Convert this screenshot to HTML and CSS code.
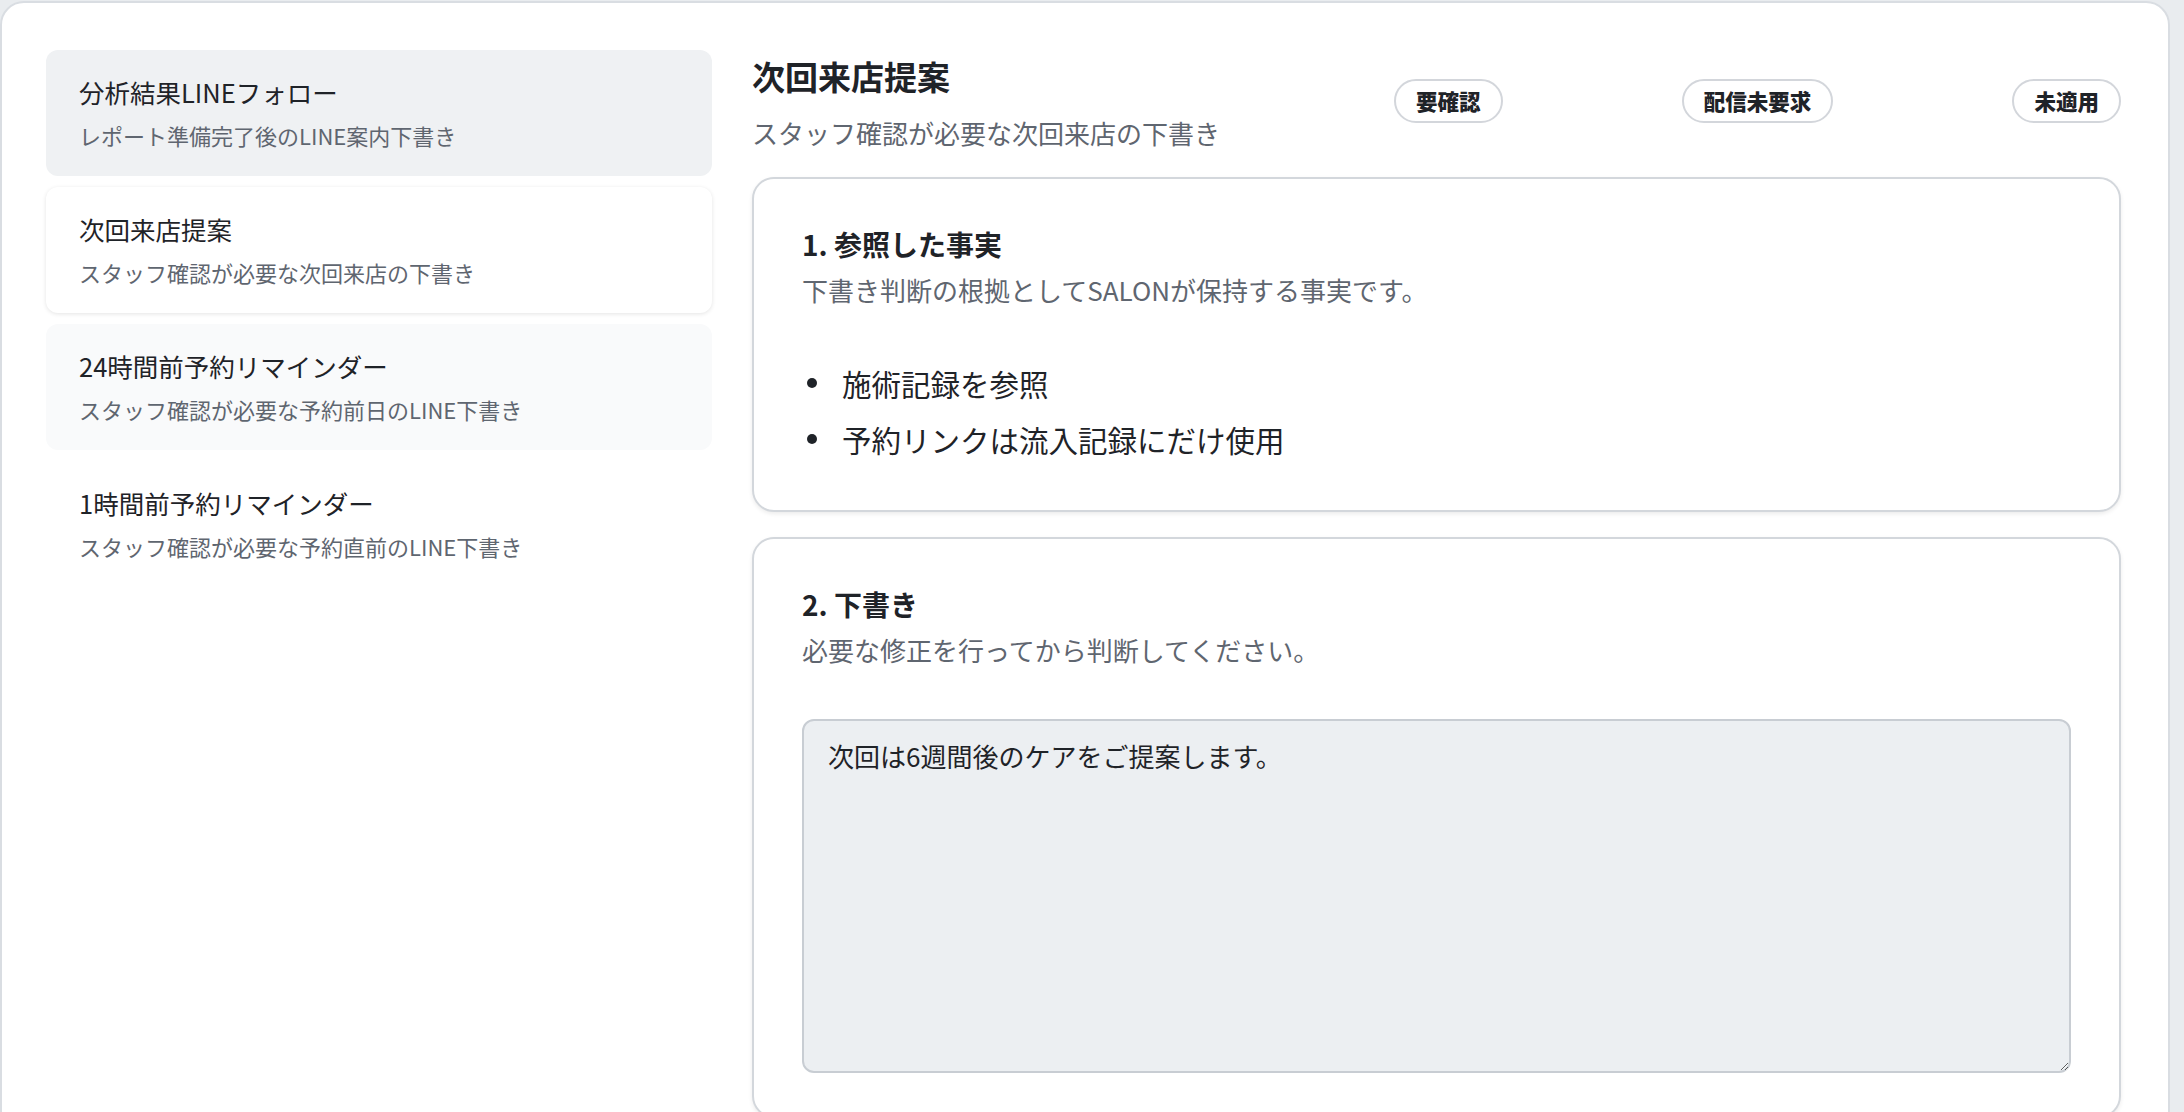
FILE: index.html
```html
<!DOCTYPE html>
<html lang="ja">
<head>
<meta charset="utf-8">
<title>次回来店提案</title>
<link rel="stylesheet" href="styles.css">
</head>
<body>
<div class="page">
  <div class="shell">
    <nav class="sidebar">
      <div class="item item-active">
        <div class="item-title">分析結果LINEフォロー</div>
        <div class="item-sub">レポート準備完了後のLINE案内下書き</div>
      </div>
      <div class="item item-current">
        <div class="item-title">次回来店提案</div>
        <div class="item-sub">スタッフ確認が必要な次回来店の下書き</div>
      </div>
      <div class="item item-soft">
        <div class="item-title">24時間前予約リマインダー</div>
        <div class="item-sub">スタッフ確認が必要な予約前日のLINE下書き</div>
      </div>
      <div class="item">
        <div class="item-title">1時間前予約リマインダー</div>
        <div class="item-sub">スタッフ確認が必要な予約直前のLINE下書き</div>
      </div>
    </nav>
    <main class="panel">
      <header class="panel-head">
        <div class="panel-title-block">
          <h1 class="panel-title">次回来店提案</h1>
          <p class="panel-sub">スタッフ確認が必要な次回来店の下書き</p>
        </div>
        <div class="badges">
          <span class="badge">要確認</span>
          <span class="badge">配信未要求</span>
          <span class="badge">未適用</span>
        </div>
      </header>
      <section class="card">
        <h2 class="card-title">1. 参照した事実</h2>
        <p class="card-desc">下書き判断の根拠としてSALONが保持する事実です。</p>
        <ul class="facts">
          <li>施術記録を参照</li>
          <li>予約リンクは流入記録にだけ使用</li>
        </ul>
      </section>
      <section class="card">
        <h2 class="card-title">2. 下書き</h2>
        <p class="card-desc">必要な修正を行ってから判断してください。</p>
        <textarea class="draft">次回は6週間後のケアをご提案します。</textarea>
      </section>
    </main>
  </div>
</div>
</body>
</html>
```

FILE: styles.css
```css
* { box-sizing: border-box; }

html, body {
  margin: 0;
  padding: 0;
  background: #e9ecef;
  font-family: "Noto Sans CJK JP", "Noto Sans", sans-serif;
  color: #1f2328;
}

.page {
  padding: 1px 14px 0 0;
}

.shell {
  background: #ffffff;
  border: 2px solid #d9dde2;
  border-radius: 24px;
  display: grid;
  grid-template-columns: 666px 1fr;
  column-gap: 40px;
  padding: 47px 47px 0 44px;
  min-height: 1200px;
}

.sidebar {
  display: flex;
  flex-direction: column;
  gap: 11px;
}

.item {
  border-radius: 12px;
  padding: 26px 32px 25px 33px;
}

.item-active {
  background: #eff1f3;
}

.item-current {
  background: #ffffff;
  box-shadow: 0 1px 4px rgba(0, 0, 0, 0.11);
}

.item-soft {
  background: #f9fafb;
}

.item-title {
  font-size: 25.5px;
  line-height: 32px;
  color: #1f2328;
}

.item-sub {
  margin-top: 12px;
  font-size: 22px;
  line-height: 31px;
  color: #5f6670;
}

.panel {
  display: flex;
  flex-direction: column;
  gap: 25px;
}

.panel-head {
  display: grid;
  grid-template-columns: 642px 1fr;
  align-items: center;
  padding-top: 2px;
  margin-bottom: 2px;
}

.panel-title {
  margin: 0;
  font-size: 33px;
  line-height: 48px;
  font-weight: 600;
  color: #1f2328;
}

.panel-sub {
  margin: 16px 0 0;
  font-size: 26px;
  line-height: 34px;
  color: #5f6670;
}

.badges {
  display: flex;
  justify-content: space-between;
  align-items: center;
}

.badge {
  display: inline-block;
  height: 44px;
  line-height: 40px;
  padding: 0 20px;
  border: 2px solid #d3d6db;
  border-radius: 999px;
  font-size: 21.5px;
  font-weight: 800;
  color: #1f2328;
  background: #ffffff;
}

.card {
  border: 2px solid #d3d7dc;
  border-radius: 22px;
  background: #ffffff;
  box-shadow: 0 2px 4px rgba(0, 0, 0, 0.08);
  padding: 46px 48px 43px 48px;
}

.card-title {
  margin: 0;
  font-size: 28px;
  line-height: 38px;
  font-weight: 700;
  color: #1f2328;
}

.card-desc {
  margin: 9px 0 0;
  font-size: 26px;
  line-height: 36px;
  color: #5f6670;
}

.facts {
  list-style: none;
  margin: 47px 0 0;
  padding: 0;
}

.facts li {
  display: flex;
  align-items: center;
  font-size: 29.5px;
  line-height: 56px;
  color: #1f2328;
}

.facts li::before {
  content: "";
  flex: 0 0 10px;
  width: 10px;
  height: 10px;
  border-radius: 50%;
  background: #1f2328;
  margin: 0 25px 0 5px;
}

.draft {
  display: block;
  width: 100%;
  height: 354px;
  margin-top: 51px;
  padding: 17px 24px;
  background: #eceff2;
  border: 2px solid #c8cdd3;
  border-radius: 12px;
  font-family: "Noto Sans CJK JP", "Noto Sans", sans-serif;
  font-size: 26px;
  line-height: 36px;
  color: #1f2328;
  resize: vertical;
}
```
